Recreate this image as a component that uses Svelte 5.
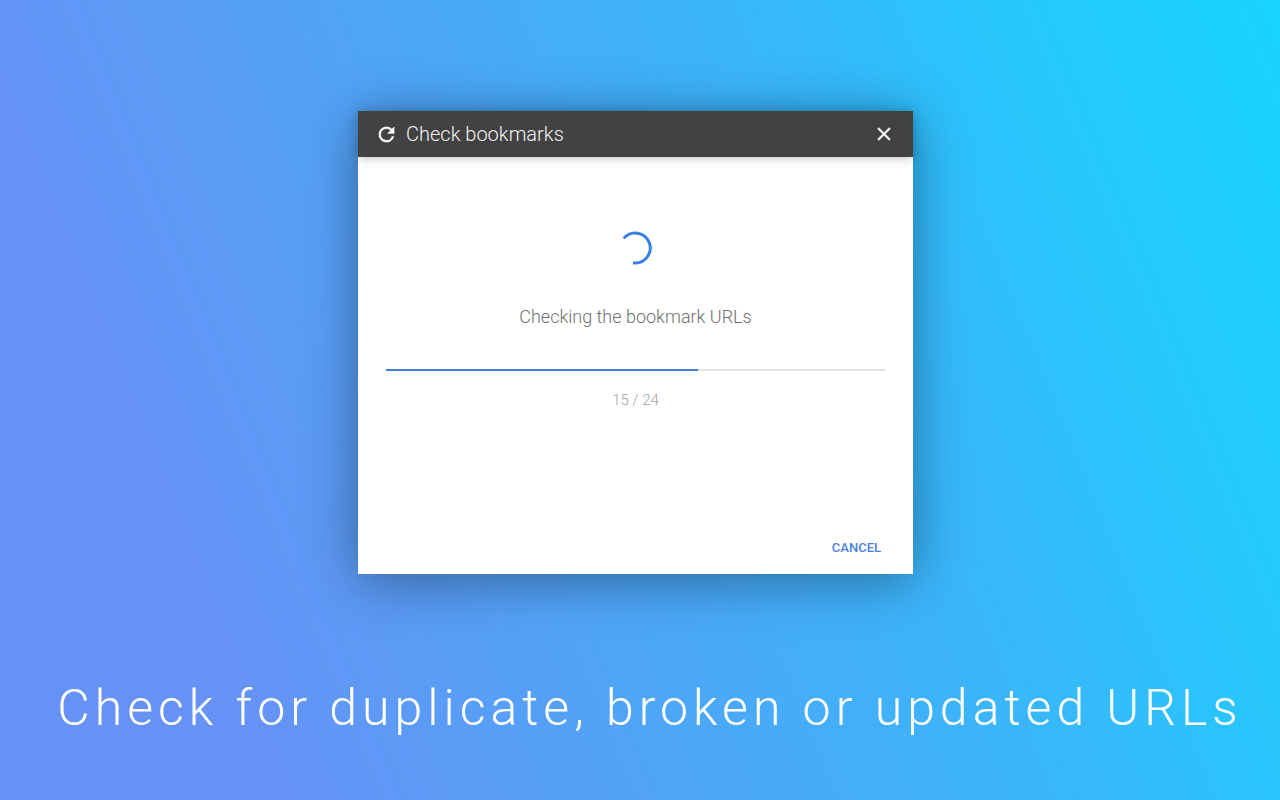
<script>
  const done = 15;
  const total = 24;
</script>

<main>
  <section class="dialog" role="dialog" aria-labelledby="title">
    <header>
      <svg class="reload" viewBox="0 0 24 24" aria-hidden="true"><path d="M17.65 6.35A7.958 7.958 0 0 0 12 4a8 8 0 1 0 7.73 10h-2.08A6 6 0 1 1 12 6c1.66 0 3.14.69 4.22 1.78L13 11h7V4z" /></svg>
      <h1 id="title">Check bookmarks</h1>
      <button class="close" aria-label="Close"><svg viewBox="0 0 24 24" aria-hidden="true"><path d="M19 6.41 17.59 5 12 10.59 6.41 5 5 6.41 10.59 12 5 17.59 6.41 19 12 13.41 17.59 19 19 17.59 13.41 12z" /></svg></button>
    </header>
    <div class="content">
      <svg class="spinner" viewBox="0 0 36 36" aria-hidden="true"><path d="M5.7 8.4A15 15 0 1 1 15 32.8" /></svg>
      <p class="status">Checking the bookmark URLs</p>
      <div class="track" role="progressbar" aria-label="Bookmarks checked" aria-valuenow={done} aria-valuemin="0" aria-valuemax={total}>
        <div class="bar" style="width: {(done / total) * 100}%"></div>
      </div>
      <p class="count">{done} / {total}</p>
    </div>
    <footer><button class="cancel">Cancel</button></footer>
  </section>
  <h2>Check for duplicate, broken or updated URLs</h2>
</main>

<style>
  :global(body) { margin: 0; }
  main {
    box-sizing: border-box;
    min-height: 100vh;
    padding: 111px 16px 56px;
    display: flex;
    flex-direction: column;
    align-items: center;
    overflow: hidden;
    font-family: Roboto, sans-serif;
    background: linear-gradient(68deg, #6792f5 16%, #50a4f7 41%, #35bafb 70%, #26c8fc 83%, #18d4fd 100%);
  }
  .dialog {
    width: 100%;
    max-width: 555px;
    margin-right: 9px;
    background: #fff;
    box-shadow: 0 6px 50px rgba(0, 0, 0, .4);
  }
  header {
    position: relative;
    display: flex;
    align-items: center;
    height: 46px;
    padding: 0 18px 0 17px;
    background: #424242;
    color: #fff;
    box-shadow: 0 1px 10px rgba(0, 0, 0, .25);
  }
  svg { display: block; fill: currentColor; }
  .reload, .close svg { width: 23px; height: 23px; stroke: currentColor; stroke-width: .4; }
  .close svg { width: 22px; height: 22px; }
  h1 { margin: 0 auto 0 8px; font-size: 20px; line-height: 24px; font-weight: 300; color: #f2f2f2; }
  button { border: 0; padding: 0; background: none; font: inherit; color: inherit; cursor: pointer; }
  .content { display: flex; flex-direction: column; align-items: center; padding: 73px 28px 0; }
  .spinner { width: 36px; height: 36px; }
  .spinner path { fill: none; stroke: #3b80e0; stroke-width: 3; }
  p { margin: 0; }
  .status { margin-top: 39px; font-size: 18px; line-height: 24px; font-weight: 300; color: #707070; }
  .track { align-self: stretch; height: 2px; margin-top: 40px; background: #e2e2e2; }
  .bar { height: 100%; background: #4580d2; }
  .count { margin-top: 19px; font-size: 15px; line-height: 20px; font-weight: 300; color: #a5a5a5; }
  footer { display: flex; justify-content: flex-end; padding: 126px 32px 14px; }
  .cancel { font-size: 13px; line-height: 24px; font-weight: 500; text-transform: uppercase; color: #4a82e0; }
  h2 { margin: 104px 0 0; padding-left: 20px; font-size: 50px; line-height: 60px; font-weight: 300; letter-spacing: 5px; color: #fff; text-align: center; }
</style>
